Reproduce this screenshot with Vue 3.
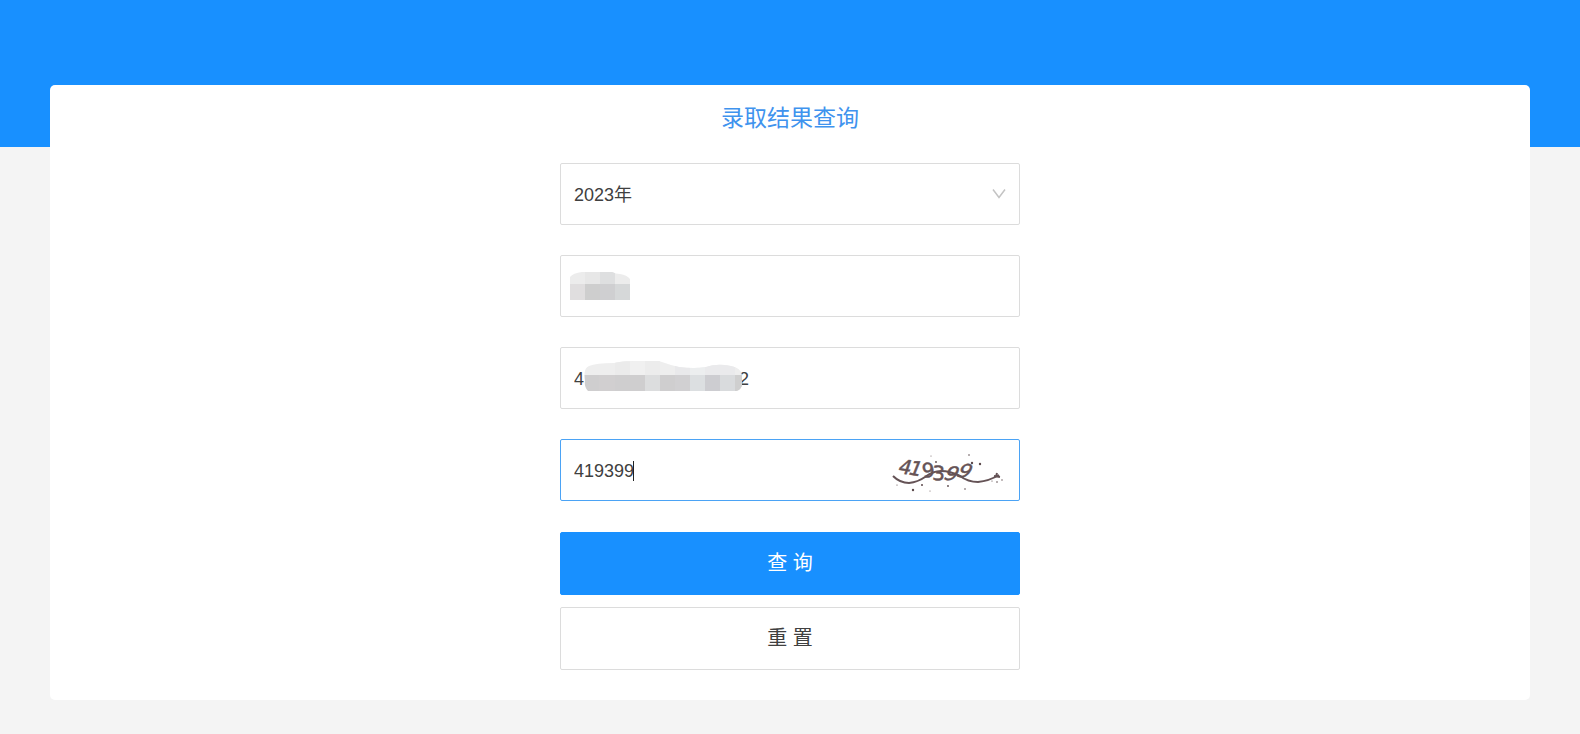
<script setup>
import { ref } from 'vue'

const year = ref('2023')
const name = ref('')
const idNumber = ref('4' + ' '.repeat(31) + '2')
const captcha = ref('419399')

const reset = () => {
  name.value = ''
  idNumber.value = ''
  captcha.value = ''
}
</script>

<template>
  <div class="page">
    <main class="card">
      <h1 class="title">录取结果查询</h1>
      <form class="form" @submit.prevent @reset.prevent="reset">
        <div class="field">
          <select v-model="year" class="control" aria-label="年份">
            <option value="2023">2023年</option>
          </select>
          <svg class="arrow" width="14" height="12" viewBox="0 0 14 12" aria-hidden="true">
            <path d="M1 1.5 7 9.5 13 1.5" fill="none" stroke="#c4c4c4" stroke-width="1.5" />
          </svg>
        </div>

        <div class="field">
          <input v-model="name" class="control" type="text" aria-label="姓名" />
          <svg class="mask" width="60" height="28" viewBox="0 0 60 28" aria-hidden="true">
            <clipPath id="mask-name">
              <path d="M0 28V5Q3 1 12 0H42Q46 2 50 2Q57 3 60 7V28Z" />
            </clipPath>
            <g clip-path="url(#mask-name)">
              <rect width="60" height="12" fill="#ececec" />
              <rect x="15" width="15" height="12" fill="#e7e7e7" />
              <rect x="30" width="15" height="12" fill="#dedfe0" />
              <rect y="12" width="15" height="16" fill="#e0dedf" />
              <rect x="15" y="12" width="15" height="16" fill="#cecece" />
              <rect x="30" y="12" width="15" height="16" fill="#cfcfd1" />
              <rect x="45" y="12" width="15" height="16" fill="#d6d8d9" />
            </g>
          </svg>
        </div>

        <div class="field">
          <input v-model="idNumber" class="control" type="text" aria-label="身份证号" />
          <svg class="mask mask-id" width="160" height="30" viewBox="0 0 160 30" aria-hidden="true">
            <clipPath id="mask-number">
              <path d="M4 30Q0 26 1 20Q-1 7 5 5Q12 2 30 2Q38 0 50 0H75Q86 4 95 6Q110 8 122 6Q133 2 147 5Q157 7 158 14V24Q157 29 152 30Z" />
            </clipPath>
            <g clip-path="url(#mask-number)">
              <rect width="160" height="14" fill="#eeeeee" />
              <rect x="31" width="15" height="14" fill="#ebebeb" />
              <rect x="46" width="15" height="14" fill="#f0f0f0" />
              <rect x="61" width="15" height="14" fill="#ececec" />
              <rect x="91" width="15" height="14" fill="#e9e9eb" />
              <rect x="106" width="15" height="14" fill="#eceeef" />
              <rect x="121" width="30" height="14" fill="#eaeaec" />
              <rect y="14" width="160" height="16" fill="#cfcecf" />
              <rect x="15" y="14" width="16" height="16" fill="#d1cfd0" />
              <rect x="61" y="14" width="15" height="16" fill="#dcddde" />
              <rect x="91" y="14" width="15" height="16" fill="#d1d0d2" />
              <rect x="106" y="14" width="15" height="16" fill="#dcdfe1" />
              <rect x="121" y="14" width="15" height="16" fill="#cdcdd1" />
              <rect x="136" y="14" width="15" height="16" fill="#d9dbdd" />
              <rect x="151" y="14" width="9" height="16" fill="#cfcfcf" />
            </g>
          </svg>
        </div>

        <div class="field">
          <input v-model="captcha" class="control active" type="text" aria-label="验证码" />
          <span class="caret" aria-hidden="true"></span>
          <svg class="captcha" width="116" height="44" viewBox="0 0 116 44" role="img" aria-label="验证码图片">
            <g class="digits">
              <text transform="translate(7 22) rotate(8) skewX(-10)">4</text>
              <text transform="translate(17 23) rotate(10) skewX(-12)">1</text>
              <text transform="translate(33 27) rotate(-8)">9</text>
              <text transform="translate(42 29) rotate(2)">3</text>
              <text transform="translate(52 28) rotate(10) skewX(-20)">9</text>
              <text transform="translate(65 25) rotate(12) skewX(-20)">9</text>
            </g>
            <path
              d="M3 25Q10 32 19 32Q28 31 35 26Q43 20 51 20Q60 20 70 25Q78 31 88 31Q99 30 109 24"
              fill="none"
              stroke="#655356"
              stroke-width="2"
            />
            <path d="M104 25 110 26M106 26 107 22" fill="none" stroke="#655356" stroke-width="2" />
            <g fill="#5c4a4c">
              <circle cx="23" cy="39" r="1.2" />
              <circle cx="82" cy="12" r="1.2" />
              <circle cx="90" cy="13" r="1.2" />
              <circle cx="32" cy="34" r="1" />
              <circle cx="79" cy="4" r=".8" />
              <circle cx="46" cy="11" r=".9" />
              <circle cx="41" cy="5" r=".5" />
              <circle cx="58" cy="35" r=".9" />
              <circle cx="75" cy="38" r=".8" />
              <circle cx="40" cy="40" r=".5" />
              <circle cx="7" cy="34" r=".6" />
              <circle cx="107" cy="31" r=".8" />
              <circle cx="112" cy="29" r=".7" />
              <circle cx="102" cy="30" r=".6" />
            </g>
          </svg>
        </div>

        <div class="actions">
          <button class="button primary" type="submit">查 询</button>
          <button class="button" type="reset">重 置</button>
        </div>
      </form>
    </main>
  </div>
</template>

<style>
body {
  margin: 0;
  background: #f4f4f4;
}
</style>

<style scoped>
.page {
  min-height: 100vh;
  box-sizing: border-box;
  padding: 85px 50px 34px;
  background: linear-gradient(#1890ff 0 147px, #f4f4f4 147px);
  font-family: "Liberation Sans", "Noto Sans CJK SC", sans-serif;
  color: #404040;
}

.card {
  box-sizing: border-box;
  padding: 16px 20px 30px;
  border-radius: 5px;
  background: #fff;
}

.title {
  margin: 0 0 28px;
  color: #3f93ee;
  font-size: 23px;
  font-weight: 400;
  line-height: 34px;
  text-align: center;
}

.form {
  display: flex;
  flex-direction: column;
  gap: 30px;
  max-width: 460px;
  margin: 0 auto;
}

.field {
  position: relative;
}

.control {
  display: block;
  box-sizing: border-box;
  width: 100%;
  height: 62px;
  padding: 2px 13px 0;
  border: 1px solid #dcdcdc;
  border-radius: 2px;
  outline: none;
  appearance: none;
  background: #fff;
  color: inherit;
  font-family: inherit;
  font-size: 18px;
}

.active {
  border-color: #4ba3f5;
}

.arrow {
  position: absolute;
  top: 25px;
  right: 14px;
  pointer-events: none;
}

.mask {
  position: absolute;
  top: 17px;
  left: 10px;
}

.mask-id {
  top: 14px;
  left: 24px;
}

.caret {
  position: absolute;
  top: 22px;
  left: 73px;
  width: 1px;
  height: 20px;
  background: #222;
}

.captcha {
  position: absolute;
  top: 12px;
  right: 14px;
}

.digits {
  fill: #655356;
  stroke: #655356;
  stroke-width: 0.5;
  font-family: "DejaVu Sans", sans-serif;
  font-size: 20px;
}

.actions {
  display: flex;
  flex-direction: column;
  gap: 12px;
  padding-top: 1px;
}

.button {
  box-sizing: border-box;
  width: 100%;
  height: 63px;
  padding: 0 0 4px;
  border: 1px solid #dcdcdc;
  border-radius: 2px;
  background: #fff;
  color: #404040;
  font-family: inherit;
  font-size: 20px;
}

.primary {
  border-color: #1890ff;
  background: #1890ff;
  color: #fff;
}
</style>
